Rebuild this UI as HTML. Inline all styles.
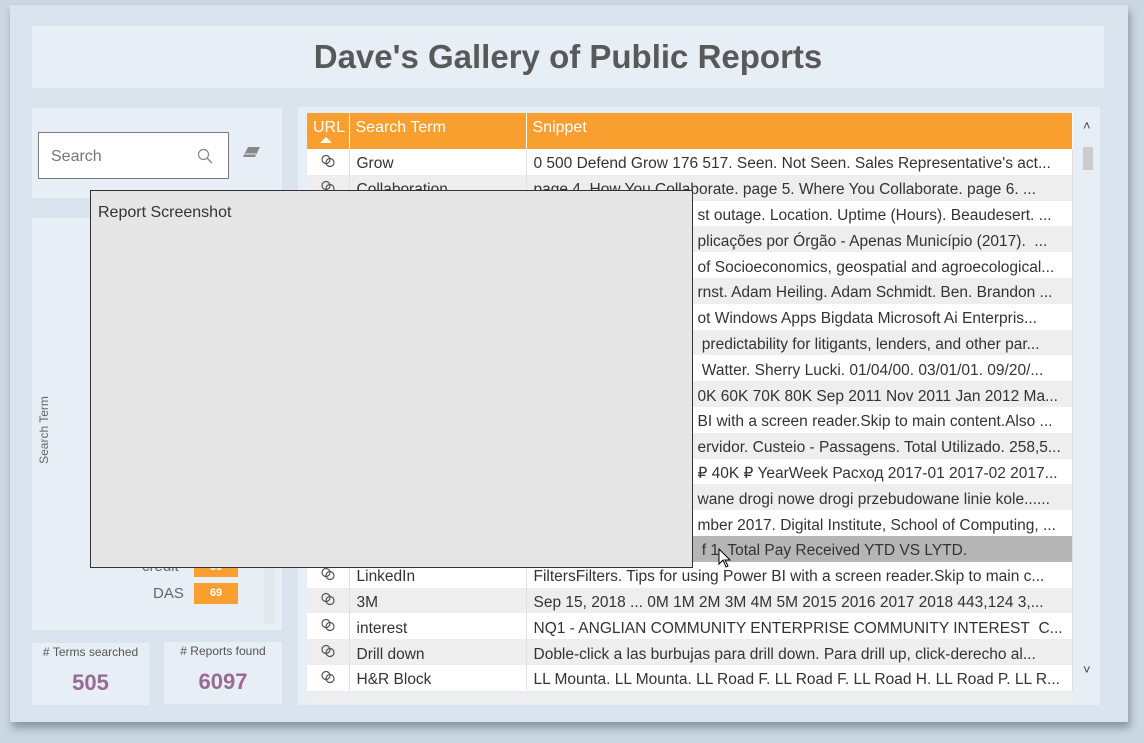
<!DOCTYPE html>
<html><head><meta charset="utf-8"><style>
*{margin:0;padding:0;box-sizing:border-box}
body{width:1144px;height:743px;background:#cbd7e1;font-family:"Liberation Sans",sans-serif;position:relative;overflow:hidden}
.abs{position:absolute}
.canvas{left:10px;top:5px;width:1118px;height:717px;background:#dae4ee;box-shadow:2px 6px 8px rgba(60,70,80,.45)}
.panel{background:#e8eef5}
.title{left:32px;top:26px;width:1072px;height:62px;font-weight:bold;font-size:33px;color:#595959;text-align:center;line-height:62px}
table{border-collapse:collapse;table-layout:fixed;position:absolute;left:307px;top:113px;width:766px;font-size:15.5px;color:#333}
th{background:#f89f2f;color:#fff;font-weight:normal;text-align:left;height:36px;padding:0 6px;border-right:1px solid #fff;font-size:16px;vertical-align:top;padding-top:6px}
td{height:25.8px;padding:5px 7px 0;white-space:nowrap;overflow:hidden;text-overflow:ellipsis;border-right:1px solid #e0e0e0}
tr:nth-child(even) td{background:#ffffff}
tr:nth-child(odd) td{background:#eeeeee}
tr.hl td{background:#b5b5b5}
td.u{text-align:center;padding:3px 0 0}
td.p{padding-left:171px}
</style></head><body>
<svg width="0" height="0" style="position:absolute"><symbol id="lk" viewBox="0 0 16 14"><circle cx="6" cy="5.5" r="4" fill="none" stroke="#555" stroke-width="1.2"/><circle cx="10" cy="8.5" r="4" fill="none" stroke="#555" stroke-width="1.2"/></symbol></svg>
<div class="abs canvas"></div>
<div class="abs panel title">Dave's Gallery of Public Reports</div>
<div class="abs panel" style="left:32px;top:108px;width:250px;height:90px"></div>
<div class="abs" style="left:38px;top:132px;width:191px;height:47px;background:#fff;border:1px solid #7a7a7a;font-size:16px;color:#777;padding:15px 12px">Search
<svg class="abs" style="left:158px;top:15px" width="16" height="16" viewBox="0 0 16 16"><circle cx="6.5" cy="6.5" r="5" fill="none" stroke="#888" stroke-width="1.2"/><path d="M10 10l5 5" stroke="#888" stroke-width="1.3"/></svg></div>
<svg class="abs" style="left:243px;top:146px" width="18" height="12" viewBox="0 0 18 12"><path d="M5 1h12l-5 10H0z" fill="#888"/><path d="M2 8h11" stroke="#eee" stroke-width="1"/></svg>
<div class="abs panel" style="left:32px;top:218px;width:250px;height:412px"></div>
<div class="abs" style="left:264px;top:228px;width:11px;height:396px;background:#e3e9ef"></div>
<div class="abs" style="left:44px;top:430px;transform:translate(-50%,-50%) rotate(-90deg);font-size:12px;color:#666;white-space:nowrap">Search Term</div>
<div class="abs" style="left:142px;top:558px;font-size:15px;color:#666">credit</div>
<div class="abs" style="left:194px;top:558px;width:44px;height:19px;background:#f89f2f;color:#fff;font-size:11px;font-weight:bold;text-align:center;line-height:19px">69</div>
<div class="abs" style="left:153px;top:585px;font-size:15px;color:#666">DAS</div>
<div class="abs" style="left:194px;top:583px;width:44px;height:21px;background:#f89f2f;color:#fff;font-size:11px;font-weight:bold;text-align:center;line-height:21px">69</div>
<div class="abs panel" style="left:32px;top:643px;width:117px;height:62px;text-align:center"><div style="font-size:12px;color:#555;margin-top:2px">#&nbsp;Terms searched</div><div style="font-size:22px;font-weight:bold;color:#9a6a92;margin-top:11px">505</div></div>
<div class="abs panel" style="left:164px;top:642px;width:118px;height:62px;text-align:center"><div style="font-size:12px;color:#555;margin-top:2px"># Reports found</div><div style="font-size:22px;font-weight:bold;color:#9a6a92;margin-top:11px">6097</div></div>
<div class="abs panel" style="left:298px;top:107px;width:802px;height:598px"></div>
<table>
<colgroup><col style="width:42px"><col style="width:177px"><col></colgroup>
<tr><th style="padding:6px 0 0 6px">URL<div style="width:0;height:0;border:6px solid transparent;border-bottom:6px solid #fff;border-top:0;margin:0 0 0 7px"></div></th><th>Search Term</th><th>Snippet</th></tr>
<tr><td class="u"><svg width="16" height="14"><use href="#lk"/></svg></td><td>Grow</td><td>0 500 Defend Grow 176 517. Seen. Not Seen. Sales Representative's act...</td></tr>
<tr><td class="u"><svg width="16" height="14"><use href="#lk"/></svg></td><td>Collaboration</td><td>page 4. How You Collaborate. page 5. Where You Collaborate. page 6. ...</td></tr>
<tr><td class="u"></td><td></td><td class="p">st outage. Location. Uptime (Hours). Beaudesert. ...</td></tr>
<tr><td class="u"></td><td></td><td class="p">plicações por Órgão - Apenas Município (2017).&nbsp; ...</td></tr>
<tr><td class="u"></td><td></td><td class="p">of Socioeconomics, geospatial and agroecological...</td></tr>
<tr><td class="u"></td><td></td><td class="p">rnst. Adam Heiling. Adam Schmidt. Ben. Brandon ...</td></tr>
<tr><td class="u"></td><td></td><td class="p">ot Windows Apps Bigdata Microsoft Ai Enterpris...</td></tr>
<tr><td class="u"></td><td></td><td class="p">&nbsp;predictability for litigants, lenders, and other par...</td></tr>
<tr><td class="u"></td><td></td><td class="p">&nbsp;Watter. Sherry Lucki. 01/04/00. 03/01/01. 09/20/...</td></tr>
<tr><td class="u"></td><td></td><td class="p">0K 60K 70K 80K Sep 2011 Nov 2011 Jan 2012 Ma...</td></tr>
<tr><td class="u"></td><td></td><td class="p">BI with a screen reader.Skip to main content.Also ...</td></tr>
<tr><td class="u"></td><td></td><td class="p">ervidor. Custeio - Passagens. Total Utilizado. 258,5...</td></tr>
<tr><td class="u"></td><td></td><td class="p">₽ 40K ₽ YearWeek Расход 2017-01 2017-02 2017...</td></tr>
<tr><td class="u"></td><td></td><td class="p">wane drogi nowe drogi przebudowane linie kole......</td></tr>
<tr><td class="u"></td><td></td><td class="p">mber 2017. Digital Institute, School of Computing, ...</td></tr>
<tr class="hl"><td class="u"></td><td></td><td class="p">&nbsp;f 1. Total Pay Received YTD VS LYTD.</td></tr>
<tr><td class="u"><svg width="16" height="14"><use href="#lk"/></svg></td><td>LinkedIn</td><td>FiltersFilters. Tips for using Power BI with a screen reader.Skip to main c...</td></tr>
<tr><td class="u"><svg width="16" height="14"><use href="#lk"/></svg></td><td>3M</td><td>Sep 15, 2018 ... 0M 1M 2M 3M 4M 5M 2015 2016 2017 2018 443,124 3,...</td></tr>
<tr><td class="u"><svg width="16" height="14"><use href="#lk"/></svg></td><td>interest</td><td>NQ1 - ANGLIAN COMMUNITY ENTERPRISE COMMUNITY INTEREST&nbsp; C...</td></tr>
<tr><td class="u"><svg width="16" height="14"><use href="#lk"/></svg></td><td>Drill down</td><td>Doble-click a las burbujas para drill down. Para drill up, click-derecho al...</td></tr>
<tr><td class="u"><svg width="16" height="14"><use href="#lk"/></svg></td><td>H&amp;R Block</td><td>LL Mounta. LL Mounta. LL Road F. LL Road F. LL Road H. LL Road P. LL R...</td></tr>
</table>
<div class="abs" style="left:307px;top:694px;width:766px;height:10px;background:#eee"></div>
<div class="abs" style="left:1083px;top:118px;font-size:13px;color:#444">˄</div>
<div class="abs" style="left:1083px;top:147px;width:10px;height:23px;background:#cdcdcd"></div>
<div class="abs" style="left:1083px;top:662px;font-size:13px;color:#444">˅</div>
<div class="abs" style="left:90px;top:190px;width:603px;height:378px;background:#e6e6e6;border:1px solid #333;font-size:16px;color:#333;padding:13px 7px">Report Screenshot</div>
<svg class="abs" style="left:718px;top:548px" width="14" height="20" viewBox="0 0 14 20"><path d="M1 1v15l4-4 3 7 2-1-3-6h5z" fill="#fff" stroke="#000"/></svg>
</body></html>
